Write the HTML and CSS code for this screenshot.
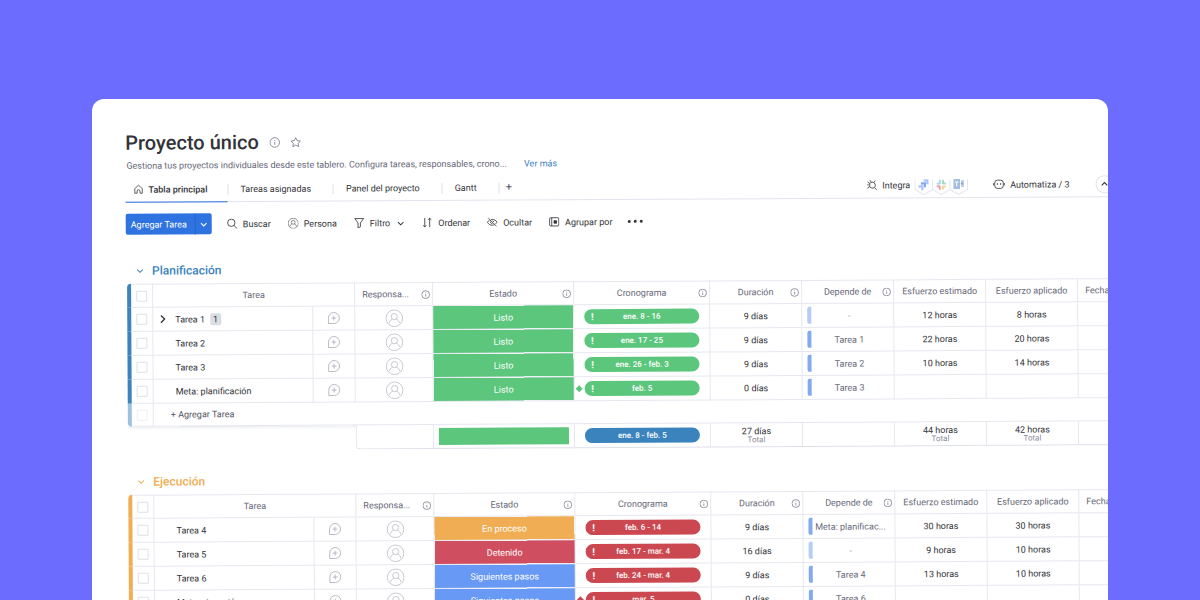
FILE: index.html
```html
<!DOCTYPE html>
<html lang="es">
<head>
<meta charset="utf-8">
<title>Proyecto único</title>
<link rel="stylesheet" href="styles.css">
</head>
<body>
<svg class="sprite" aria-hidden="true">
  <symbol id="info" viewBox="0 0 12 12"><circle cx="6" cy="6" r="5.2"/><path d="M6 5.4v3.2M6 3.3v.9"/></symbol>
  <symbol id="star" viewBox="0 0 12 12"><path d="M6 .9l1.55 3.3 3.6.45-2.65 2.5.7 3.6L6 8.95l-3.2 1.8.7-3.6L.85 4.65l3.6-.45z"/></symbol>
  <symbol id="home" viewBox="0 0 12 12"><path d="M1.5 5.2L6 1.2l4.500 4V10.800H7.700V8.300a1.700 1.700 0 0 0-3.400 0v2.500H1.500z"/></symbol>
  <symbol id="down" viewBox="0 0 10 10"><path d="M1.500 3.500L5 7l3.500-3.500"/></symbol>
  <symbol id="up" viewBox="0 0 10 10"><path d="M1.500 6.500L5 3l3.500 3.500"/></symbol>
  <symbol id="right" viewBox="0 0 10 10"><path d="M3 1l4 4-4 4"/></symbol>
  <symbol id="search" viewBox="0 0 12 12"><circle cx="5" cy="5" r="4"/><path d="M8 8l3.400 3.400"/></symbol>
  <symbol id="person" viewBox="0 0 18 18"><circle cx="9" cy="9" r="8.300"/><circle cx="9" cy="7.300" r="3.100"/><path d="M4 13.800c0-2 1.300-3.200 3-3.700M14 13.800c0-2-1.300-3.200-3-3.700"/></symbol>
  <symbol id="filter" viewBox="0 0 12 12"><path d="M1.200 1.200h9.600L7.300 6v4.200l-2.600 1V6z"/></symbol>
  <symbol id="sort" viewBox="0 0 12 12"><path d="M3.300 1v9.700M1.500 9l1.800 1.800L5 9M8.700 11V1.200M6.900 3l1.800-1.800L10.500 3"/></symbol>
  <symbol id="hide" viewBox="0 0 12 12"><path d="M1.800 1.600l8.800 8.800M3.300 3.600C2 4.300 1.200 5.300.7 6.100 1.800 7.900 3.700 9.300 6 9.300c.9 0 1.800-.2 2.500-.6M4.800 3c.4-.1.800-.1 1.200-.1 2.300 0 4.200 1.300 5.300 3.200-.4.700-1 1.300-1.600 1.800M4.500 5c-.9 1.400.2 2.800 1.700 2.600M6.400 4.400c.7.100 1.200.6 1.300 1.300"/></symbol>
  <symbol id="group" viewBox="0 0 12 12"><rect x="1" y="1.500" width="10" height="9" rx="1"/><path d="M3.300 1.500v9"/><rect class="solid" x="5.800" y="4.800" width="2.700" height="2.700"/></symbol>
  <symbol id="plug" viewBox="0 0 12 12"><path d="M3.500 4.300C4.800 2.600 7.300 2.500 8.700 4c1.300 1.500 1.200 3.600-.2 4.900C6.700 9.800 4.700 9.300 3.600 8zM8.900 9l2.300 2.300M3.500 4.300L1.200 2.700M3.500 7.800L1 9.400M.8 5.900h1.700M5 2.700L3.800.8M8.200 3.300L9.500 1.200"/></symbol>
  <symbol id="robot" viewBox="0 0 14 12"><rect x="2.300" y="1.500" width="9.400" height="9" rx="3"/><path d="M.8 4.700v2.600M13.200 4.700v2.600M5.200 4.700v2M8.800 4.700v2"/></symbol>
  <symbol id="chat" viewBox="0 0 14 14"><path d="M1.200 12.800V7a5.900 5.900 0 1 1 5.900 5.800zM7 4.400v5.200M4.400 7h5.200"/></symbol>
</svg>

<main class="card">
  <div class="board">
    <header class="head">
      <div class="title-row">
        <h1 class="title">Proyecto único</h1>
        <svg class="icon title-icon"><use href="#info"/></svg>
        <svg class="icon title-icon"><use href="#star"/></svg>
      </div>
      <p class="desc">Gestiona tus proyectos individuales desde este tablero. Configura tareas, responsables, crono... <a class="more" href="#mas">Ver más</a></p>
    </header>

    <div class="tabs">
      <nav class="tab-list">
        <button class="tab tab-on"><svg class="icon home"><use href="#home"/></svg>Tabla principal</button>
        <button class="tab">Tareas asignadas</button>
        <button class="tab">Panel del proyecto</button>
        <button class="tab">Gantt</button>
        <button class="tab tab-add" aria-label="Agregar vista">+</button>
      </nav>
      <div class="extras">
        <button class="extra"><svg class="icon"><use href="#plug"/></svg>Integra</button>
        <svg class="apps" viewBox="0 0 54 16">
          <g fill="none" stroke="#e3e5ee"><path d="M.5 0v10.500l8.700 5 8.800-5V0M18 10.500l8.700 5 8.800-5V0M35.500 10.500l8.700 5 8.800-5V0"/></g>
          <path fill="#a9c4fb" d="M9 0h5v5h-2.200V2.400H9z"/><path fill="#86a9f5" d="M6.500 3h5v5H9.300V5.400H6.500z"/><path fill="#a9c4fb" d="M4 6h5v5H6.800V8.400H4z"/>
          <g stroke-width="2" stroke-linecap="round" fill="none"><path stroke="#a8d8ee" d="M25.300 1.500v3M23 4.500h2"/><path stroke="#a5dcc0" d="M28.500 1.500v3M30.500 4.500h-1"/><path stroke="#efa0ad" d="M25.300 7.500v2.300M23 7.200h1.500"/><path stroke="#f3d595" d="M28.500 7.300v2.300M30.500 7.300h-1"/></g>
          <rect x="39" y="0" width="6.500" height="10" fill="#a3bedd"/><path d="M40.500 3h3.500M42.200 3v4.500" stroke="#fff" fill="none"/><path d="M46.500 1h3v7h-3z" fill="#bfd2ea"/><circle cx="47.500" cy="4.500" r="1.200" fill="#88a8d0"/>
        </svg>
        <button class="extra extra-auto"><svg class="icon robot"><use href="#robot"/></svg>Automatiza / 3</button>
        <button class="collapse" aria-label="Contraer encabezado"><svg class="icon mini"><use href="#up"/></svg></button>
      </div>
    </div>

    <div class="tools">
      <div class="split">
        <button class="split-main">Agregar Tarea</button>
        <button class="split-more" aria-label="Más opciones"><svg class="icon mini"><use href="#down"/></svg></button>
      </div>
      <button class="tool tool-search"><svg class="icon"><use href="#search"/></svg>Buscar</button>
      <button class="tool"><svg class="icon"><use href="#person"/></svg>Persona</button>
      <button class="tool"><svg class="icon"><use href="#filter"/></svg>Filtro<svg class="icon mini tool-arrow"><use href="#down"/></svg></button>
      <button class="tool"><svg class="icon"><use href="#sort"/></svg>Ordenar</button>
      <button class="tool"><svg class="icon"><use href="#hide"/></svg>Ocultar</button>
      <button class="tool"><svg class="icon"><use href="#group"/></svg>Agrupar por</button>
      <button class="dots" aria-label="Más"><i></i><i></i><i></i></button>
    </div>

    <section class="section plan">
      <h2 class="group-title"><svg class="icon mini"><use href="#down"/></svg>Planificación</h2>
      <table class="grid">
        <colgroup><col class="c-bar"><col class="c-check"><col class="c-task"><col class="c-chat"><col class="c-owner"><col class="c-status"><col class="c-time"><col class="c-num"><col class="c-num"><col class="c-num"><col class="c-num"><col class="c-num"></colgroup>
        <thead>
          <tr>
            <td class="bar bar-top"></td>
            <td><input class="check" type="checkbox" aria-label="Seleccionar todo"></td>
            <th colspan="2">Tarea</th>
            <th><div class="th left"><span>Responsa...</span><svg class="icon hint"><use href="#info"/></svg></div></th>
            <th><div class="th"><span>Estado</span><svg class="icon hint"><use href="#info"/></svg></div></th>
            <th><div class="th"><span>Cronograma</span><svg class="icon hint"><use href="#info"/></svg></div></th>
            <th><div class="th"><span>Duración</span><svg class="icon hint"><use href="#info"/></svg></div></th>
            <th><div class="th"><span>Depende de</span><svg class="icon hint"><use href="#info"/></svg></div></th>
            <th>Esfuerzo estimado</th>
            <th>Esfuerzo aplicado</th>
            <th class="last">Fecha</th>
          </tr>
        </thead>
        <tbody>
          <tr>
            <td class="bar"></td><td><input class="check" type="checkbox" aria-label="Tarea 1"></td>
            <td class="task"><div class="name"><svg class="icon open"><use href="#right"/></svg>Tarea 1<span class="count">1</span></div></td>
            <td><svg class="icon chat"><use href="#chat"/></svg></td><td><svg class="icon owner"><use href="#person"/></svg></td>
            <td class="status done">Listo</td><td class="time"><div class="pill done"><b>!</b><span>ene. 8 - 16</span></div></td>
            <td>9 días</td><td class="dep"><div class="link none"><span>-</span></div></td><td>12 horas</td><td>8 horas</td><td></td>
          </tr>
          <tr>
            <td class="bar"></td><td><input class="check" type="checkbox" aria-label="Tarea 2"></td>
            <td class="task">Tarea 2</td>
            <td><svg class="icon chat"><use href="#chat"/></svg></td><td><svg class="icon owner"><use href="#person"/></svg></td>
            <td class="status done">Listo</td><td class="time"><div class="pill done"><b>!</b><span>ene. 17 - 25</span></div></td>
            <td>9 días</td><td class="dep"><div class="link"><span>Tarea 1</span></div></td><td>22 horas</td><td>20 horas</td><td></td>
          </tr>
          <tr>
            <td class="bar"></td><td><input class="check" type="checkbox" aria-label="Tarea 3"></td>
            <td class="task">Tarea 3</td>
            <td><svg class="icon chat"><use href="#chat"/></svg></td><td><svg class="icon owner"><use href="#person"/></svg></td>
            <td class="status done">Listo</td><td class="time"><div class="pill done"><b>!</b><span>ene. 26 - feb. 3</span></div></td>
            <td>9 días</td><td class="dep"><div class="link"><span>Tarea 2</span></div></td><td>10 horas</td><td>14 horas</td><td></td>
          </tr>
          <tr>
            <td class="bar"></td><td><input class="check" type="checkbox" aria-label="Meta: planificación"></td>
            <td class="task">Meta: planificación</td>
            <td><svg class="icon chat"><use href="#chat"/></svg></td><td><svg class="icon owner"><use href="#person"/></svg></td>
            <td class="status done">Listo</td><td class="time"><div class="pill done goal"><b>!</b><span>feb. 5</span></div></td>
            <td>0 días</td><td class="dep"><div class="link"><span>Tarea 3</span></div></td><td></td><td></td><td></td>
          </tr>
          <tr class="add-row">
            <td class="bar bar-end"></td><td><input class="check" type="checkbox" aria-label="Nueva tarea" disabled></td>
            <td class="add" colspan="10">+ Agregar Tarea</td>
          </tr>
        </tbody>
        <tfoot>
          <tr>
            <td class="blank" colspan="4"></td>
            <td class="sum-first"></td>
            <td><div class="sum-status done"></div></td>
            <td class="time"><div class="pill total"><span>ene. 8 - feb. 5</span></div></td>
            <td class="sum">27 días<small>Total</small></td><td></td>
            <td class="sum">44 horas<small>Total</small></td><td class="sum">42 horas<small>Total</small></td><td></td>
          </tr>
        </tfoot>
      </table>
    </section>

    <section class="section exec">
      <h2 class="group-title"><svg class="icon mini"><use href="#down"/></svg>Ejecución</h2>
      <table class="grid">
        <colgroup><col class="c-bar"><col class="c-check"><col class="c-task"><col class="c-chat"><col class="c-owner"><col class="c-status"><col class="c-time"><col class="c-num"><col class="c-num"><col class="c-num"><col class="c-num"><col class="c-num"></colgroup>
        <thead>
          <tr>
            <td class="bar bar-top"></td>
            <td><input class="check" type="checkbox" aria-label="Seleccionar todo"></td>
            <th colspan="2">Tarea</th>
            <th><div class="th left"><span>Responsa...</span><svg class="icon hint"><use href="#info"/></svg></div></th>
            <th><div class="th"><span>Estado</span><svg class="icon hint"><use href="#info"/></svg></div></th>
            <th><div class="th"><span>Cronograma</span><svg class="icon hint"><use href="#info"/></svg></div></th>
            <th><div class="th"><span>Duración</span><svg class="icon hint"><use href="#info"/></svg></div></th>
            <th><div class="th"><span>Depende de</span><svg class="icon hint"><use href="#info"/></svg></div></th>
            <th>Esfuerzo estimado</th>
            <th>Esfuerzo aplicado</th>
            <th class="last">Fecha</th>
          </tr>
        </thead>
        <tbody>
          <tr>
            <td class="bar"></td><td><input class="check" type="checkbox" aria-label="Tarea 4"></td>
            <td class="task">Tarea 4</td>
            <td><svg class="icon chat"><use href="#chat"/></svg></td><td><svg class="icon owner"><use href="#person"/></svg></td>
            <td class="status doing">En proceso</td><td class="time"><div class="pill late"><b>!</b><span>feb. 6 - 14</span></div></td>
            <td>9 días</td><td class="dep"><div class="link"><span>Meta: planificac...</span></div></td><td>30 horas</td><td>30 horas</td><td></td>
          </tr>
          <tr>
            <td class="bar"></td><td><input class="check" type="checkbox" aria-label="Tarea 5"></td>
            <td class="task">Tarea 5</td>
            <td><svg class="icon chat"><use href="#chat"/></svg></td><td><svg class="icon owner"><use href="#person"/></svg></td>
            <td class="status stuck">Detenido</td><td class="time"><div class="pill late"><b>!</b><span>feb. 17 - mar. 4</span></div></td>
            <td>16 días</td><td class="dep"><div class="link none"><span>-</span></div></td><td>9 horas</td><td>10 horas</td><td></td>
          </tr>
          <tr>
            <td class="bar"></td><td><input class="check" type="checkbox" aria-label="Tarea 6"></td>
            <td class="task">Tarea 6</td>
            <td><svg class="icon chat"><use href="#chat"/></svg></td><td><svg class="icon owner"><use href="#person"/></svg></td>
            <td class="status next">Siguientes pasos</td><td class="time"><div class="pill late"><b>!</b><span>feb. 24 - mar. 4</span></div></td>
            <td>9 días</td><td class="dep"><div class="link"><span>Tarea 4</span></div></td><td>13 horas</td><td>10 horas</td><td></td>
          </tr>
          <tr>
            <td class="bar"></td><td><input class="check" type="checkbox" aria-label="Meta: ejecución"></td>
            <td class="task">Meta: ejecución</td>
            <td><svg class="icon chat"><use href="#chat"/></svg></td><td><svg class="icon owner"><use href="#person"/></svg></td>
            <td class="status next">Siguientes pasos</td><td class="time"><div class="pill late goal"><b>!</b><span>mar. 5</span></div></td>
            <td>0 días</td><td class="dep"><div class="link"><span>Tarea 6</span></div></td><td></td><td></td><td></td>
          </tr>
        </tbody>
      </table>
    </section>
  </div>
</main>
</body>
</html>
```

FILE: styles.css
```css
* { box-sizing: border-box; }

body {
  margin: 0;
  height: 100vh;
  padding: 99px 92px 0;
  overflow: hidden;
  background: #6c6cff;
  color: #323338;
  font: 9px/12px Roboto, "Liberation Sans", sans-serif;
}

button {
  margin: 0;
  padding: 0;
  border: 0;
  background: none;
  color: inherit;
  font: inherit;
  white-space: nowrap;
}

.sprite { position: absolute; width: 0; height: 0; }

.icon {
  flex: none;
  width: 11px;
  height: 11px;
  fill: none;
  stroke: currentColor;
  stroke-width: .9;
}
.icon.mini { width: 8px; height: 8px; stroke-width: 1.3; }
.solid { fill: currentColor; }

.card {
  height: 100%;
  overflow: hidden;
  border-radius: 12px 12px 0 0;
  background: #fff;
}

/* The whole board leans slightly, as one sheet */
.board {
  padding: 31px 0 0 33px;
  transform: rotate(-0.33deg);
  transform-origin: 0 0;
}

.title-row { display: flex; align-items: center; gap: 10px; height: 26px; }
.title { margin: 0; font-size: 20px; line-height: 26px; font-weight: 500; }
.title-icon { color: #676879; stroke-width: .8; }
.desc { margin: 4px 0 0 1px; color: #676879; white-space: nowrap; }
.more { margin-left: 15px; color: #3b83bd; text-decoration: none; }

.tabs {
  display: flex;
  justify-content: space-between;
  margin-top: 5px;
  height: 26px;
  border-bottom: 1px solid #e3e5ee;
}
.tab-list { display: flex; }
.tab {
  position: relative;
  display: flex;
  align-items: center;
  height: 26px;
  padding: 0 22px 0 13px;
}
.tab + .tab::before {
  content: "";
  position: absolute;
  left: 0;
  width: 1px;
  height: 11px;
  background: #e0e2ea;
}
.tab-on {
  gap: 5px;
  padding: 0 20px 0 8px;
  border-bottom: 1px solid #2f73e0;
  font-weight: 500;
}
.home { width: 10px; }
.tab-add { padding: 0 7px; font-size: 11px; color: #53545f; }

.extras {
  display: flex;
  align-items: center;
  margin-top: 3px;
  padding-bottom: 3px;
  overflow: hidden;
}
.extra { display: flex; align-items: center; gap: 5px; }
.apps { width: 54px; height: 16px; margin-left: 4px; margin-top: 4px; }
.extra-auto { margin-left: 24px; }
.robot { width: 13px; }
.collapse {
  display: flex;
  align-items: center;
  justify-content: center;
  width: 18px;
  height: 18px;
  margin: 0 -5px 0 26px;
  border: 1px solid #e3e5ee;
  border-radius: 9px;
}

.tools { display: flex; align-items: center; gap: 17px; margin-top: 11px; height: 21px; }
.split {
  display: flex;
  height: 21px;
  border-radius: 2px;
  background: #2f73e0;
  color: #fff;
}
.split-main { padding: 0 8px 0 5px; }
.split-more {
  display: flex;
  align-items: center;
  justify-content: center;
  width: 17px;
  border-left: 1px solid #2a66cb;
}
.tool { display: flex; align-items: center; gap: 5px; }
.tool-search { margin-left: -2px; }
.tool-arrow { margin-left: 2px; }
.dots { display: flex; gap: 3px; margin-left: -2px; }
.dots i { width: 3px; height: 3px; border-radius: 2px; background: #323338; }

.section { padding-left: 1px; }
.group-title {
  display: flex;
  align-items: center;
  gap: 8px;
  margin: 28px 0 5px;
  padding-left: 9px;
  color: var(--accent);
  font-size: 12px;
  line-height: 16px;
  font-weight: 500;
}
.plan { --accent: #3b83bd; --accent-soft: #9dc1de; }
.exec { --accent: #f0ad53; --accent-soft: #f8d6a9; }
.exec .group-title { margin-top: 23px; }

.grid {
  width: 1043px;
  table-layout: fixed;
  border-collapse: separate;
  border-spacing: 0;
  text-align: center;
}
.c-bar { width: 4px; }
.c-check { width: 22px; }
.c-task { width: 160px; }
.c-chat { width: 42px; }
.c-owner { width: 78px; }
.c-status { width: 141px; }
.c-time { width: 136px; }
.c-num { width: 92px; }

.grid th, .grid td {
  height: 24px;
  padding: 0;
  border-right: 1px solid #e6e8f0;
  border-bottom: 1px solid #e6e8f0;
  white-space: nowrap;
}
.grid svg, .grid input { display: block; margin: 0 auto; }
.grid thead th, .grid thead td { border-top: 1px solid #e6e8f0; }
.grid th { color: #676879; font-weight: 400; }
.grid .last { padding-left: 7px; text-align: left; }
.grid .bar { border: 0; background: var(--accent); }
.grid .bar-top { border-radius: 4px 0 0 0; }
.grid .bar-end { border-radius: 0 0 0 4px; background: var(--accent-soft); }

.th { display: grid; grid-template-columns: 1fr auto 1fr; align-items: center; padding: 0 2px; }
.th span { grid-column: 2; }
.th.left { grid-template-columns: 0 auto 1fr; padding-left: 7px; }
.grid .hint { width: 9px; height: 9px; margin: 0 0 0 auto; }

.check {
  appearance: none;
  width: 11px;
  height: 11px;
  border: 1px solid #dfe1ea;
  border-radius: 1px;
  background: #fff;
}
.check:disabled { opacity: .5; }

.grid .task { padding-left: 22px; text-align: left; }
.name { display: flex; align-items: center; margin-left: -17px; }
.name .open { width: 9px; height: 9px; margin: 0 8px 0 0; stroke-width: 1.5; }
.count { margin-left: 5px; padding: 0 3px; border-radius: 2px; background: #d9dde6; }
.chat { width: 13px; height: 13px; color: #b4b6c2; stroke-width: 1; }
.owner { width: 18px; height: 18px; color: #c0c2cc; }

.done { background-color: #5bc67c; }
.doing { background-color: #f0ad53; }
.stuck { background-color: #cf4f60; }
.next { background-color: #6899f4; }
.late { background-color: #cc4850; }
.total { background-color: #3b83bd; }
.status { background-clip: padding-box; color: #fff; }

.pill {
  position: relative;
  display: grid;
  grid-template-columns: 16px 1fr 16px;
  align-items: center;
  height: 15px;
  margin: 0 10px;
  border-radius: 8px;
  color: #fff;
  font-size: 8px;
  font-weight: 500;
}
.pill span { grid-column: 2; }
.pill b { font-size: 10px; font-weight: 700; }
.goal::before {
  content: "";
  position: absolute;
  top: 5px;
  left: -8px;
  width: 5px;
  height: 5px;
  background: inherit;
  transform: rotate(45deg);
}

.link { display: flex; align-items: center; padding: 0 6px 0 5px; color: #676879; }
.link::before { content: ""; width: 4px; height: 17px; border-radius: 2px 0 0 2px; background: #83a9f1; }
.link.none::before { background: #b4ccf7; }
.link span { flex: 1; }

.grid .add-row td { height: 23px; }
.grid .add { padding-left: 17px; color: #53545f; text-align: left; }
.grid .blank { border: 0; box-shadow: inset 0 4px 4px -4px #d9dbe6; }
.grid .sum-first { border-left: 1px solid #e6e8f0; border-radius: 0 0 0 4px; }
.grid tfoot td { border-bottom-color: #dfe1ea; }
.sum-status { height: 17px; margin: 0 5px; }
.sum { line-height: 9px; }
.sum small { display: block; color: #8a8b99; font-size: 8px; line-height: 7px; }
```
